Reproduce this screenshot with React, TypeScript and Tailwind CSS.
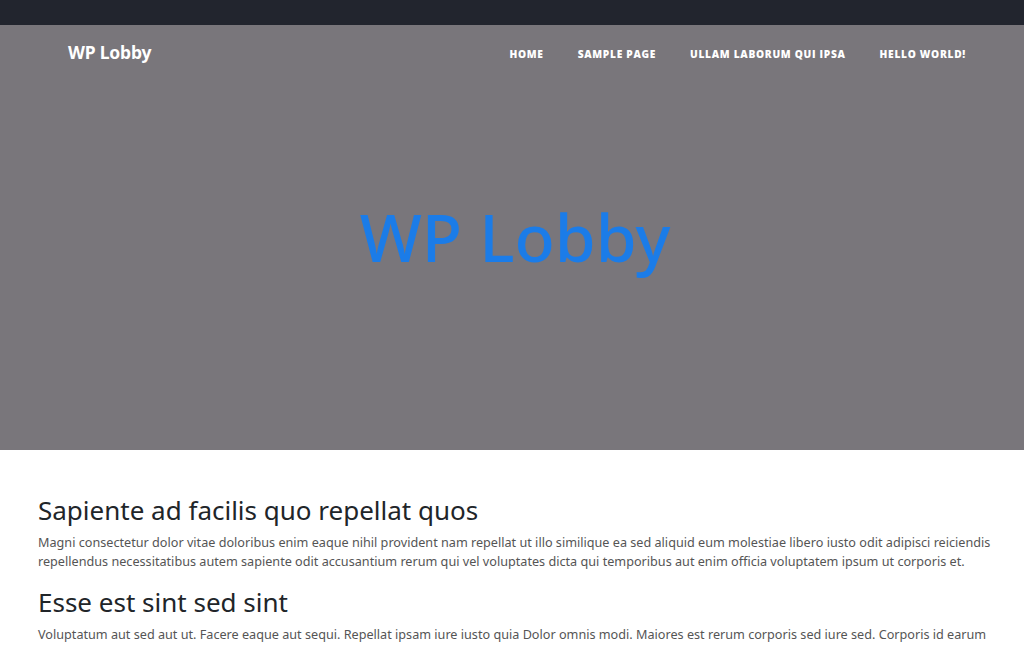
import React from 'react'

const navLinks = ['Home', 'Sample Page', 'Ullam laborum qui ipsa', 'Hello world!']

const posts = [
  {
    title: 'Sapiente ad facilis quo repellat quos',
    body: 'Magni consectetur dolor vitae doloribus enim eaque nihil provident nam repellat ut illo similique ea sed aliquid eum molestiae libero iusto odit adipisci reiciendis repellendus necessitatibus autem sapiente odit accusantium rerum qui vel voluptates dicta qui temporibus aut enim officia voluptatem ipsum ut corporis et.',
  },
  {
    title: 'Esse est sint sed sint',
    body: 'Voluptatum aut sed aut ut. Facere eaque aut sequi. Repellat ipsam iure iusto quia Dolor omnis modi. Maiores est rerum corporis sed iure sed. Corporis id earum',
  },
]

const App = () => {
  return (
    <div className="w-full h-[647px] overflow-hidden bg-white font-['Noto_Sans',sans-serif]">
      <div className="h-[25px] bg-[#22252e]" />

      {/* Hero */}
      <header className="h-[425px] bg-[#79767b] flex flex-col">
        <nav className="flex items-center justify-between pl-[68px] pr-[58px] h-[54px]">
          <a href="#" className="text-white font-bold text-[17.5px] tracking-[-0.2px]">
            WP Lobby
          </a>
          <ul className="flex items-center gap-[34px]">
            {navLinks.map((label) => (
              <li key={label}>
                <a
                  href="#"
                  className="text-white uppercase font-extrabold text-[10.2px] tracking-[0.7px] font-['Open_Sans',sans-serif]"
                >
                  {label}
                </a>
              </li>
            ))}
          </ul>
        </nav>
        <div className="flex-1 flex items-center justify-center pb-[58px] pl-[6px]">
          <h1 className="text-[#1b7ce8] text-[66px] font-medium leading-none">WP Lobby</h1>
        </div>
      </header>

      {/* Posts */}
      <main className="pl-[38px] pr-[22px] pt-[43px]">
        {posts.map((post) => (
          <article key={post.title} className="mb-[14px]">
            <h2 className="text-[#212529] text-[26px] leading-[34px] mb-[6px]">{post.title}</h2>
            <p className="text-[#555] text-[12.65px] leading-[19px]">{post.body}</p>
          </article>
        ))}
      </main>
    </div>
  )
}

export default App
